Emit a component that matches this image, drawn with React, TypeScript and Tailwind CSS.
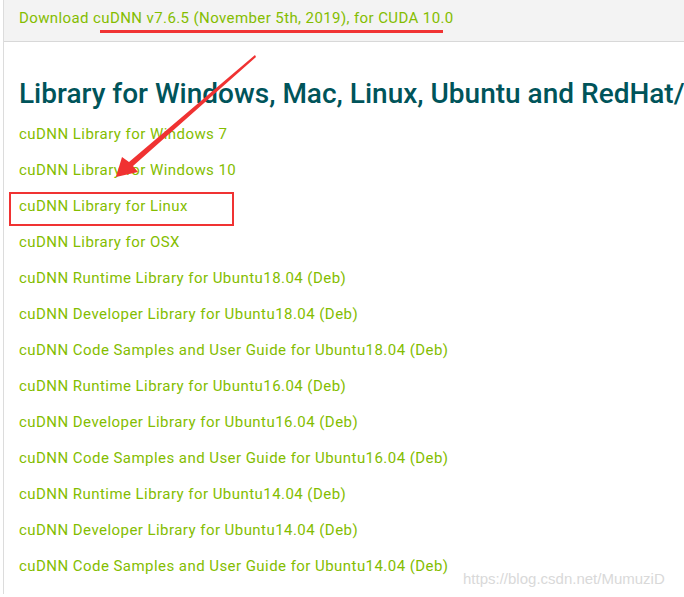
import React from "react";

const links = [
  "cuDNN Library for Windows 7",
  "cuDNN Library for Windows 10",
  "cuDNN Library for Linux",
  "cuDNN Library for OSX",
  "cuDNN Runtime Library for Ubuntu18.04 (Deb)",
  "cuDNN Developer Library for Ubuntu18.04 (Deb)",
  "cuDNN Code Samples and User Guide for Ubuntu18.04 (Deb)",
  "cuDNN Runtime Library for Ubuntu16.04 (Deb)",
  "cuDNN Developer Library for Ubuntu16.04 (Deb)",
  "cuDNN Code Samples and User Guide for Ubuntu16.04 (Deb)",
  "cuDNN Runtime Library for Ubuntu14.04 (Deb)",
  "cuDNN Developer Library for Ubuntu14.04 (Deb)",
  "cuDNN Code Samples and User Guide for Ubuntu14.04 (Deb)",
];

export default function App() {
  return (
    <div
      className="relative w-[684px] h-[597px] overflow-hidden bg-white"
      style={{ fontFamily: "Roboto, 'Liberation Sans', sans-serif" }}
    >
      <div className="ml-[3px] h-[594px] border-l border-[#dcdcdc] flex flex-col">
        <div className="h-[42px] bg-[#f3f3f3] border-b border-[#d8d8d8] pl-[15px] flex items-center pb-[4px]">
          <span className="text-[15px] text-[#84bd00] tracking-[0.4px] whitespace-nowrap">
            Download cuDNN v7.6.5 (November 5th, 2019), for CUDA 10.0
          </span>
        </div>
        <div className="pl-[15px] pt-[35px] flex flex-col">
          <h1 className="text-[28px] leading-[34px] font-medium text-[#00545a] whitespace-nowrap">
            Library for Windows, Mac, Linux, Ubuntu and RedHat/Centos(x86_64 architecture)
          </h1>
          <ul className="mt-[5px] flex flex-col">
            {links.map((l) => (
              <li
                key={l}
                className="h-[36px] flex items-center text-[15px] text-[#84bd00] whitespace-nowrap tracking-[0.45px]"
              >
                {l}
              </li>
            ))}
          </ul>
        </div>
      </div>

      {/* annotations */}
      <div className="absolute left-[100px] top-[30px] w-[343px] h-[3px] bg-[#f03232]" />
      <div className="absolute left-[9px] top-[192px] w-[225px] h-[34px] border-2 border-[#f03232]" />
      <svg className="absolute left-0 top-0" width="684" height="597">
        <polygon
          points="255,55 256,57 133,166 138,172 116,177 122,157 129,162"
          fill="#f03232"
        />
      </svg>

      <div
        className="absolute left-[463px] top-[568px] text-[15px] text-[#d9d9d9] whitespace-nowrap"
        style={{ fontFamily: "'Liberation Sans', Arial, sans-serif" }}
      >
        https://blog.csdn.net/MumuziD
      </div>
    </div>
  );
}
